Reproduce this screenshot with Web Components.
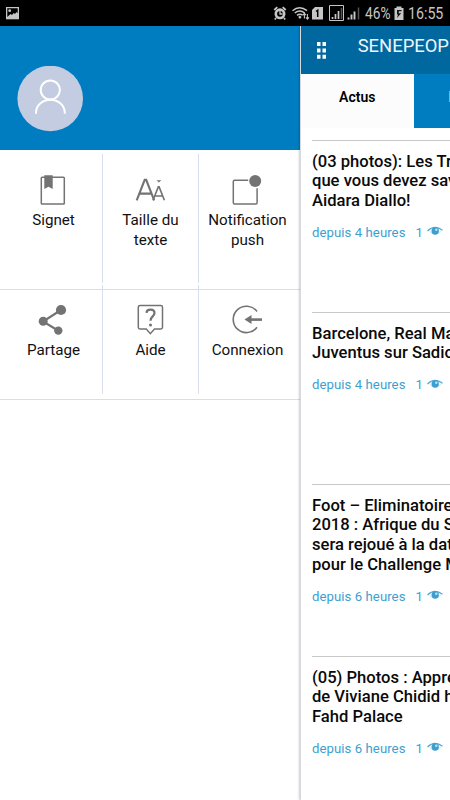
<!DOCTYPE html>
<html lang="fr"><head><meta charset="utf-8"><title>Senepeople</title>
<style>html,body{margin:0;width:450px;height:800px;overflow:hidden;background:#fff;font-family:Roboto,"Liberation Sans",sans-serif}</style></head>
<body><news-app></news-app>
<script>
const define=(name,html)=>customElements.define(name,class extends HTMLElement{
  constructor(){super();this.attachShadow({mode:'open'}).innerHTML=html;}
});
define('status-bar',`<style>
:host{display:flex;height:26px;background:#000;color:#c6c6c6;font-size:16.500px;line-height:28px;box-sizing:border-box}
svg{display:block;flex:none}.gap{flex:1}.pct,.time{white-space:nowrap;transform-origin:0 50%}
.pct{width:28px;transform:scaleX(.83)}.time{width:42px;transform:scaleX(.86)}
</style>
<svg width="26" height="26"><path d="M6 7h13v12.300H6z" fill="#c6c6c6"/><path d="M7.300 8.300h10.400v5l-1.200-1.300-1.500 2-1.300-1-1.700 2-1.500-1-3.200 3z" fill="#000"/><circle cx="9.700" cy="10.700" r="1.400" fill="#c6c6c6"/></svg>
<span class="gap"></span>
<svg width="93" height="26" viewBox="272 0 93 26" fill="none" stroke="#c6c6c6">
<circle cx="280" cy="13.800" r="4.200" stroke-width="2.600"/><path d="M280 11v3h2.600" stroke-width="1.300"/><path d="M274.300 10l3-2.800M285.700 10l-3-2.800M276 18l-1.200 1.500M284 18l1.200 1.500" stroke-width="1.800"/>
<path d="M292.500 10.700q7-6 14.500 0M294.700 13q5-4 10 0M297 15.300q3-2.300 5.700 0" stroke-width="1.500"/><path d="M298.200 17l1.700-1.500 1.700 1.500-1.700 2z" fill="#c6c6c6" stroke="none"/>
<path d="M304.400 18.500v-5m-1.500 1.600l1.500-1.700 1.500 1.700M307.400 14v5m-1.500-1.600l1.500 1.700 1.500-1.700" stroke-width="1.100"/>
<path d="M315 7h8v12.500h-11V10z" fill="#c6c6c6" stroke="none"/><path d="M316 11.500l1.700-1.300V17" stroke="#000" stroke-width="1.500"/>
<path d="M329.500 5.500h14v15h-14z"/><path d="M332.500 19v-2M335.500 19v-5M338.500 19v-8" stroke-width="1.700"/><path d="M341.500 19V8" stroke="#555" stroke-width="1.500"/>
<path d="M348.500 19.500v-2M351.500 19.500v-5M354.500 19.500v-8" stroke-width="1.900"/><path d="M358.500 19.500V7.500" stroke="#555" stroke-width="1.500"/></svg>
<span class="pct">46%</span>
<svg width="15" height="26" viewBox="393 0 15 26"><path d="M394.500 8h2V6.500h5V8h2v12h-9z" fill="#c6c6c6"/><path d="M397 10h4.500v1.300h-2.700v1.900h2.400l-4.200 4.800 1-3.600h-1z" fill="#111"/></svg>
<span class="time">16:55</span>`);
define('drawer-profile',`<style>:host{display:flex;height:124px;background:#007dc1;box-sizing:border-box;padding:40px 17px}svg{display:block}</style>
<svg width="67" height="67" viewBox="17 66 67 67"><circle cx="50.200" cy="98.500" r="32.800" fill="#c3cce0"/><g fill="none" stroke="#fff" stroke-width="2"><circle cx="50.300" cy="90" r="9.600"/><path d="M36 113.800v-1a14.400 13 0 0 1 28.800 0v1"/></g></svg>`);
define('menu-tile',`<style>:host{display:flex;flex-direction:column;align-items:center;color:#111;font-size:15.200px;line-height:20.300px;text-align:center;box-sizing:border-box}
::slotted(svg){display:block;width:40px;height:36px;margin-left:-1px;fill:none;stroke:#737373;stroke-width:1.500}
.label{padding-top:var(--label-gap,2px)}</style><slot name="icon"></slot><div class="label"><slot></slot></div>`);
define('drawer-menu',`<style>
:host{display:block;padding-top:4px}
.row{display:grid;grid-template-columns:103px 96px 101px;box-sizing:border-box;border-bottom:1px solid #dadded}
.one{height:136px}.two{height:110px}
menu-tile{border-right:1px solid #dadded}menu-tile:last-child{border-right:0}
.one menu-tile{height:129px;padding-top:18px}.two menu-tile{--label-gap:2px;height:109px;margin-top:-5px;padding-top:17px}
</style>
<div class="row one">
<menu-tile style="padding-left:5px"><svg slot="icon" viewBox="34 172 40 36"><rect x="42.300" y="177.300" width="23" height="26.700" rx=".8"/><path d="M45.300 175.300h8.400v13.800l-4.200-2.400-4.200 2.400z" fill="#737373" stroke="none"/></svg>Signet</menu-tile>
<menu-tile><svg slot="icon" viewBox="130 172 40 36"><path d="M136.700 200.300l8-20.500h1.500l8 20.500M139.700 193.600h11.700" stroke-width="2.100"/><path d="M153 200.300l5.300-13.400h.8l5.300 13.400M155 196h7.300" stroke-width="1.600"/><path d="M156.500 180.300h4.800l-2.400 2.200z" fill="#737373" stroke="none"/></svg>Taille du<br>texte</menu-tile>
<menu-tile style="padding-right:4px"><svg slot="icon" viewBox="227 172 40 36"><path d="M248.200 180.300h-13.700q-1.200 0-1.200 1.200v21.200q0 1.200 1.200 1.200h21.400q1.200 0 1.200-1.200v-14.500"/><circle cx="255.200" cy="180.900" r="6" fill="#737373" stroke="none"/></svg>Notification<br>push</menu-tile>
</div>
<div class="row two">
<menu-tile style="padding-left:5px"><svg slot="icon" viewBox="34 302 40 36"><path d="M62 310l-18 11.500 15 9" stroke-width="2.100"/><g fill="#737373" stroke="none"><circle cx="62" cy="310" r="5.100"/><circle cx="44.200" cy="321.200" r="4.500"/><circle cx="59.300" cy="330.600" r="4.200"/></g></svg>Partage</menu-tile>
<menu-tile><svg slot="icon" viewBox="130 302 40 36"><path d="M140 305.500h20.800q1.700 0 1.700 1.700v20q0 1.700-1.700 1.700h-6.300l-4.200 4.800-4-4.800H140q-1.700 0-1.700-1.700v-20q0-1.700 1.700-1.700z"/><path d="M146.500 312.800c.3-4.200 8-4.200 8 .3 0 3.400-4 3.200-4 7.600" stroke-width="2.200"/><circle cx="150.500" cy="325" r="1.500" fill="#737373" stroke="none"/></svg>Aide</menu-tile>
<menu-tile style="padding-right:4px"><svg slot="icon" viewBox="227 302 40 36"><path d="M257 311.500a13.200 13.200 0 1 0 0 15.800" stroke-width="1.600"/><path d="M249 319.600h13" stroke-width="2.600"/><path d="M244.500 319.600l7-4.500v9z" fill="#737373" stroke="none"/></svg>Connexion</menu-tile>
</div>`);
define('side-drawer',`<style>:host{display:block;width:300px;height:774px;background:#fff;flex:none}</style><drawer-profile></drawer-profile><drawer-menu></drawer-menu>`);
define('page-header',`<style>:host{display:flex;height:48px;background:#00689e;color:#eef7ff;font-size:18.400px;line-height:40px;white-space:nowrap;overflow:hidden}svg{width:56.700px;height:48px;flex:none}</style>
<svg viewBox="301 26 56.700 48" fill="#fff"><path d="M317 42h3.500v4H317zm5.500 0h3.500v4h-3.500zM317 48.500h3.500v4H317zm5.500 0h3.500v4h-3.500zM317 54.700h3.500v4H317zm5.500 0h3.500v4h-3.500z"/></svg><slot></slot>`);
define('page-tabs',`<style>:host{display:flex;height:54px;background:#007dc1;overflow:hidden}div{box-sizing:border-box}.on{width:112.500px;height:54px;background:#fcfcfc;text-align:center;font-weight:600;font-size:14px;line-height:46px;color:#000;flex:none}.off{padding-left:34.700px;color:#c6e5f7;font-size:14px;line-height:46px}</style><div class="on">Actus</div><div class="off">P</div>`);
define('news-item',`<style>:host{display:block;height:172px;box-sizing:border-box;border-top:1px solid #c9c9c9;padding-top:10.700px;margin-left:11px;white-space:nowrap;overflow:hidden}
.title{font-weight:500;font-size:16.600px;line-height:19.700px;color:#0a0a0a}
.meta{display:flex;align-items:center;height:20px;margin-top:11.700px;font-size:13.200px;letter-spacing:.05px;color:#3d9fd0}.count{margin-left:10px;width:11px}svg{width:16px;height:12px;display:block}</style>
<div class="title"><slot></slot></div><div class="meta"><slot name="age"></slot><span class="count">1</span>
<svg viewBox="0 0 16 12"><path d="M.5 5Q7.500-1.800 15.500 4.300" fill="none" stroke="#4ba6d4" stroke-width="1.100"/><path d="M2.500 5.500Q8 10.500 14 5" fill="none" stroke="#b5daed" stroke-width=".7"/><circle cx="8.200" cy="5" r="3.700" fill="#3d9fd0"/><circle cx="9.300" cy="3.700" r="1.200" fill="#bfe3f3"/></svg></div>`);
define('news-page',`<style>:host{display:block;position:relative;width:149px;height:774px;background:#fff;border-left:1px solid #d5d8dc;box-shadow:-1px 0 2px #0003;overflow:hidden;box-sizing:content-box}.feed{padding-top:12px}page-header,page-tabs{position:relative}</style>
<page-header>SENEPEOP</page-header><page-tabs></page-tabs>
<div class="feed">
<news-item>(03 photos): Les Tr<br>que vous devez sav<br>Aidara Diallo!<span slot="age">depuis 4 heures</span></news-item>
<news-item>Barcelone, Real Ma<br>Juventus sur Sadio<span slot="age">depuis 4 heures</span></news-item>
<news-item>Foot – Eliminatoire<br>2018 : Afrique du S<br>sera rejoué à la dat<br>pour le Challenge M<span slot="age">depuis 6 heures</span></news-item>
<news-item>(05) Photos : Appre<br>de Viviane Chidid h<br>Fahd Palace<span slot="age">depuis 6 heures</span></news-item>
</div>`);
define('news-app',`<style>:host{display:block;width:450px;height:800px;overflow:hidden}.main{display:flex}</style><status-bar></status-bar><div class="main"><side-drawer></side-drawer><news-page></news-page></div>`);
</script></body></html>
